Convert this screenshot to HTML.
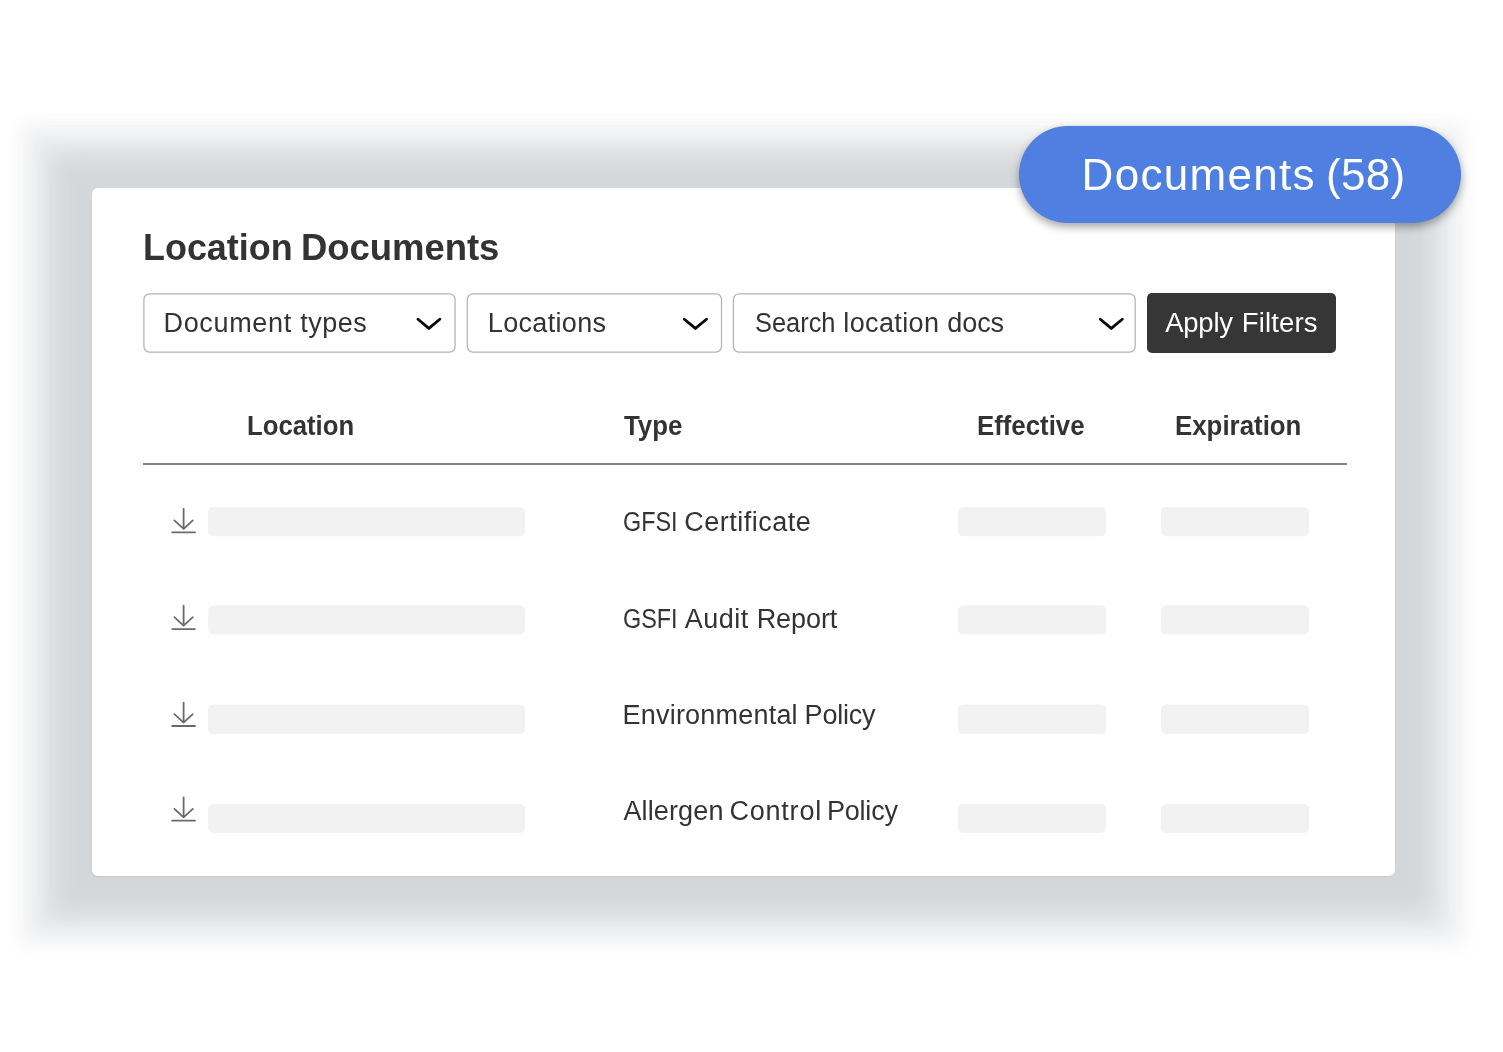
<!DOCTYPE html>
<html lang="en">
<head>
<meta charset="utf-8">
<title>Location Documents</title>
<style>
  html, body { margin: 0; padding: 0; }
  body {
    width: 1503px; height: 1052px; overflow: hidden; position: relative;
    background: #ffffff;
    font-family: "Liberation Sans", sans-serif;
    color: #333333;
  }
  .abs { position: absolute; }
  .txt { position: absolute; left: 0; top: 0; width: 1503px; height: 1052px; will-change: transform; }
  .t { position: absolute; white-space: nowrap; line-height: 1; }
  .sh { position: absolute; background: #d3d7da; border-radius: 3px; filter: blur(8.5px); }
  .card {
    position: absolute; left: 92px; top: 188px; width: 1303px; height: 688px;
    background: #ffffff; border-radius: 6px;
    box-shadow: 0 1px 2px rgba(0,0,0,0.06);
  }
  .pill {
    position: absolute; left: 1019px; top: 126px; width: 442px; height: 96.8px;
    border-radius: 48.4px; background: #4f7fe0;
    box-shadow: 0 4px 8px rgba(0,0,0,0.35);
  }
  .btn {
    position: absolute; left: 1146.8px; top: 293.1px; width: 189.1px; height: 59.7px; border-radius: 5px;
    background: #363636;
  }
  .rule { position: absolute; left: 143px; top: 463px; width: 1204px; height: 2px; background: #838383; }
</style>
</head>
<body>

<div class="sh" style="left:20px;top:123px;width:1445px;height:823px;opacity:0.25"></div>
<div class="sh" style="left:33px;top:136px;width:1419px;height:797px;opacity:0.3333"></div>
<div class="sh" style="left:47px;top:150px;width:1391px;height:769px;opacity:0.5"></div>
<div class="sh" style="left:60px;top:163px;width:1365px;height:743px;opacity:1"></div>
<div class="card"></div>
<div class="pill"></div>
<div class="btn"></div>
<div class="rule"></div>

<svg class="abs" style="left:0;top:0" width="1503" height="1052" viewBox="0 0 1503 1052">
  <g fill="#ffffff" stroke="#b4b4b4" stroke-width="1.25">
    <rect x="143.9" y="293.9" width="311.2" height="58.2" rx="5.5"/>
    <rect x="467.3" y="293.9" width="254.2" height="58.2" rx="5.5"/>
    <rect x="733.4" y="293.9" width="401.8" height="58.2" rx="5.5"/>
  </g>
  <g fill="none" stroke="#0a0a0a" stroke-width="2.9" stroke-linecap="round" stroke-linejoin="round">
    <path d="M418 319.25 L428.9 328.4 L439.8 319.25"/>
    <path d="M684.3 319.25 L695.4 328.4 L706.5 319.25"/>
    <path d="M1100.3 319.25 L1111.3 328.4 L1122.3 319.25"/>
  </g>
  <g fill="#f2f2f2">
    <rect x="208.1" y="507.0" width="317.1" height="29.2" rx="5.5"/>
    <rect x="957.8" y="507.0" width="148.5" height="29.2" rx="5.5"/>
    <rect x="1160.9" y="507.0" width="148.3" height="29.2" rx="5.5"/>
    <rect x="208.1" y="605.3" width="317.1" height="29.3" rx="5.5"/>
    <rect x="957.8" y="605.3" width="148.5" height="29.3" rx="5.5"/>
    <rect x="1160.9" y="605.3" width="148.3" height="29.3" rx="5.5"/>
    <rect x="208.1" y="704.4" width="317.1" height="29.6" rx="5.5"/>
    <rect x="957.8" y="704.4" width="148.5" height="29.6" rx="5.5"/>
    <rect x="1160.9" y="704.4" width="148.3" height="29.6" rx="5.5"/>
    <rect x="208.1" y="804.1" width="317.1" height="28.8" rx="5.5"/>
    <rect x="957.8" y="804.1" width="148.5" height="28.8" rx="5.5"/>
    <rect x="1160.9" y="804.1" width="148.3" height="28.8" rx="5.5"/>
  </g>
  <g fill="none" stroke="#6a6a6a" stroke-width="1.8" stroke-linecap="round" stroke-linejoin="round">
    <path d="M183.6 508.90 V528.90 M174.40 520.40 L183.6 528.90 L192.80 520.40 M172.20 532.30 H195.00"/>
    <path d="M183.6 605.70 V625.70 M174.40 617.20 L183.6 625.70 L192.80 617.20 M172.20 629.10 H195.00"/>
    <path d="M183.6 702.60 V722.60 M174.40 714.10 L183.6 722.60 L192.80 714.10 M172.20 726.00 H195.00"/>
    <path d="M183.6 797.30 V817.30 M174.40 808.80 L183.6 817.30 L192.80 808.80 M172.20 820.70 H195.00"/>
  </g>
</svg>

<div class="txt">
<span class="t" style="left:1081.60px;top:153px;font-size:44px;letter-spacing:1.283px;color:#ffffff;">Documents</span>
<span class="t" style="left:1326.00px;top:153px;font-size:44px;letter-spacing:0.269px;color:#ffffff;">(58)</span>
<span class="t" style="left:142.63px;top:230px;font-size:36.5px;letter-spacing:0.000px;color:#333333;transform:scaleX(0.9840);transform-origin:0 0;font-weight:bold;">Location</span>
<span class="t" style="left:301.00px;top:230px;font-size:36.5px;letter-spacing:-0.044px;color:#333333;font-weight:bold;">Documents</span>
<span class="t" style="left:163.50px;top:310px;font-size:27px;letter-spacing:0.664px;color:#333333;">Document</span>
<span class="t" style="left:300.30px;top:310px;font-size:27px;letter-spacing:0.492px;color:#333333;">types</span>
<span class="t" style="left:487.80px;top:310px;font-size:27px;letter-spacing:0.327px;color:#333333;">Locations</span>
<span class="t" style="left:754.86px;top:310px;font-size:27px;letter-spacing:0.000px;color:#333333;transform:scaleX(0.9410);transform-origin:0 0;">Search</span>
<span class="t" style="left:843.30px;top:310px;font-size:27px;letter-spacing:0.379px;color:#333333;">location</span>
<span class="t" style="left:947.30px;top:310px;font-size:27px;letter-spacing:-0.077px;color:#333333;">docs</span>
<span class="t" style="left:1165.20px;top:309px;font-size:27.5px;letter-spacing:-0.235px;color:#ffffff;">Apply</span>
<span class="t" style="left:1241.70px;top:309px;font-size:27.5px;letter-spacing:0.165px;color:#ffffff;">Filters</span>
<span class="t" style="left:246.95px;top:413px;font-size:27px;letter-spacing:0.000px;color:#333333;transform:scaleX(0.9518);transform-origin:0 0;font-weight:bold;">Location</span>
<span class="t" style="left:623.80px;top:413px;font-size:27px;letter-spacing:0.000px;color:#333333;transform:scaleX(0.9558);transform-origin:0 0;font-weight:bold;">Type</span>
<span class="t" style="left:977.35px;top:413px;font-size:27px;letter-spacing:0.000px;color:#333333;transform:scaleX(0.9549);transform-origin:0 0;font-weight:bold;">Effective</span>
<span class="t" style="left:1175.34px;top:413px;font-size:27px;letter-spacing:0.000px;color:#333333;transform:scaleX(0.9573);transform-origin:0 0;font-weight:bold;">Expiration</span>
<span class="t" style="left:622.94px;top:509px;font-size:27px;letter-spacing:0.000px;color:#333333;transform:scaleX(0.8644);transform-origin:0 0;">GFSI</span>
<span class="t" style="left:684.30px;top:509px;font-size:27px;letter-spacing:0.488px;color:#333333;">Certificate</span>
<span class="t" style="left:622.93px;top:606px;font-size:27px;letter-spacing:0.000px;color:#333333;transform:scaleX(0.8661);transform-origin:0 0;">GSFI</span>
<span class="t" style="left:684.80px;top:606px;font-size:27px;letter-spacing:0.490px;color:#333333;">Audit</span>
<span class="t" style="left:756.70px;top:606px;font-size:27px;letter-spacing:-0.088px;color:#333333;">Report</span>
<span class="t" style="left:622.60px;top:702px;font-size:27px;letter-spacing:0.201px;color:#333333;">Environmental</span>
<span class="t" style="left:804.60px;top:702px;font-size:27px;letter-spacing:-0.204px;color:#333333;">Policy</span>
<span class="t" style="left:623.40px;top:798px;font-size:27px;letter-spacing:0.136px;color:#333333;">Allergen</span>
<span class="t" style="left:729.40px;top:798px;font-size:27px;letter-spacing:0.793px;color:#333333;">Control</span>
<span class="t" style="left:827.00px;top:798px;font-size:27px;letter-spacing:-0.224px;color:#333333;">Policy</span>
</div>

</body>
</html>
